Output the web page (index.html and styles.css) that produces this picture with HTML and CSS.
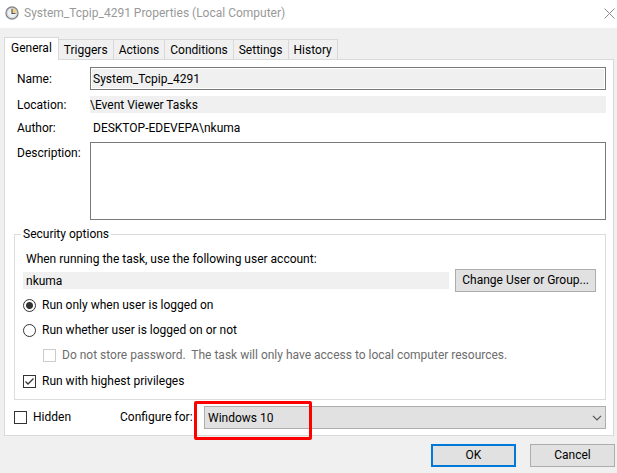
FILE: index.html
```html
<!DOCTYPE html>
<html lang="en">
  <head>
    <meta charset="UTF-8" />
    <meta name="viewport" content="width=device-width, initial-scale=1.0" />
    <title>System_Tcpip_4291 Properties (Local Computer)</title>
    <link rel="stylesheet" href="styles.css">
  </head>
  <body>
    <header class="titlebar">
      <svg class="clock" viewBox="0 0 14 14" aria-hidden="true">
        <circle cx="7" cy="7" r="6" fill="#eef1f3" stroke="#85888b" stroke-width="1.4" />
        <path d="M7 7V2a5 5 0 0 1 5 5z" fill="#f3d08a" />
        <circle cx="7" cy="7" r="4.8" fill="none" stroke="#c3c6c8" stroke-width="0.6" />
        <path d="M7 3v4.5h3.5" fill="none" stroke="#55585b" stroke-width="1.2" />
      </svg>
      <h1>System_Tcpip_4291 Properties (Local Computer)</h1>
      <button class="close" type="button" aria-label="Close">
        <svg viewBox="0 0 11 11"><path d="M0.5 0.5l10 10M10.5 0.5l-10 10" fill="none" stroke="#8c8c8c" /></svg>
      </button>
    </header>

    <main>
      <nav class="tabs" role="tablist">
        <button class="tab active" type="button" role="tab" aria-selected="true">General</button>
        <button class="tab" type="button" role="tab">Triggers</button>
        <button class="tab" type="button" role="tab">Actions</button>
        <button class="tab" type="button" role="tab">Conditions</button>
        <button class="tab" type="button" role="tab">Settings</button>
        <button class="tab" type="button" role="tab">History</button>
      </nav>

      <form class="panel" id="taskForm">
        <div class="fields">
          <label for="name">Name:</label>
          <input class="name" type="text" id="name" value="System_Tcpip_4291" readonly />
          <label for="location">Location:</label>
          <input class="plain" type="text" id="location" value="\Event Viewer Tasks" readonly />
          <span class="caption">Author:</span>
          <span class="author">DESKTOP-EDEVEPA\nkuma</span>
          <label class="top" for="description">Description:</label>
          <textarea id="description"></textarea>
        </div>

        <fieldset>
          <legend>Security options</legend>
          <label class="hint" for="account">When running the task, use the following user account:</label>
          <div class="account">
            <input class="plain" type="text" id="account" value="nkuma" readonly />
            <button class="btn" type="button">Change User or Group...</button>
          </div>
          <label class="option"><input type="radio" name="run" checked /> Run only when user is logged on</label>
          <label class="option"><input type="radio" name="run" /> Run whether user is logged on or not</label>
          <label class="option sub"><input type="checkbox" disabled /> Do not store password.&nbsp; The task will only have access to local computer resources.</label>
          <label class="option"><input type="checkbox" checked /> Run with highest privileges</label>
        </fieldset>

        <div class="bottom">
          <label class="option"><input type="checkbox" /> Hidden</label>
          <label class="configure" for="os">Configure for:</label>
          <div class="select">
            <select id="os">
              <option>Windows 10</option>
            </select>
            <svg class="arrow" viewBox="0 0 10 6" aria-hidden="true"><path d="M1 0.8l4 4 4-4" fill="none" stroke="#555" stroke-width="1.2" /></svg>
            <span class="highlight"></span>
          </div>
        </div>
      </form>
    </main>

    <footer>
      <button class="btn primary" type="submit" form="taskForm">OK</button>
      <button class="btn" type="button">Cancel</button>
    </footer>
  </body>
</html>
```
FILE: styles.css
```css
* {
  box-sizing: border-box;
}

body {
  margin: 0;
  background: #f0f0f0;
  color: #000;
}

body,
button,
input,
select,
textarea {
  font-family: Roboto, "Open Sans", sans-serif;
  font-size: 12px;
  line-height: 17px;
}

.titlebar {
  display: flex;
  align-items: center;
  height: 28px;
  padding: 0 2px 2px 5px;
  background: #fff;
}

.clock {
  width: 14px;
  height: 14px;
}

.titlebar h1 {
  flex: 1;
  margin: 0 0 0 5px;
  font-size: 12px;
  font-weight: normal;
  color: #999;
}

.close {
  display: flex;
  padding: 0;
  border: none;
  background: none;
}

.close svg {
  width: 11px;
  height: 11px;
}

main {
  padding: 9px 3px 0 4px;
}

.tabs {
  display: flex;
  align-items: flex-end;
}

.tab {
  height: 20px;
  padding: 1px 5px 0;
  border: 1px solid #d9d9d9;
  border-width: 1px 1px 0 0;
  background: #f0f0f0;
  color: #000;
}

.tab.active {
  height: 23px;
  margin-bottom: -1px;
  padding: 0 6px 2px;
  border-left-width: 1px;
  background: #fff;
  z-index: 1;
}

.panel {
  padding: 7px 7px 6px 9px;
  border: 1px solid #d9d9d9;
  background: #fff;
}

.fields {
  display: grid;
  grid-template-columns: 76px 1fr;
  row-gap: 6px;
  align-items: center;
}

.fields label,
.caption,
.author {
  height: 17px;
  padding-left: 3px;
  line-height: 19px;
}

.fields .top {
  align-self: start;
  margin-top: 2px;
}

input[type="text"] {
  width: 100%;
  min-width: 0;
  margin: 0;
  border: none;
  background: #f0f0f0;
}

.name[type="text"] {
  height: 23px;
  padding: 0 2px;
  border: 1px solid #7a7a7a;
  box-shadow: inset 0 0 0 1px #fff;
}

.plain[type="text"] {
  height: 17px;
  padding: 1px 0 0;
}

textarea {
  display: block;
  width: 100%;
  height: 78px;
  margin: 0;
  border: 1px solid #7a7a7a;
  resize: none;
}

fieldset {
  min-width: 0;
  margin: 6px 0 0;
  padding: 8px 9px 5px 8px;
  border: 1px solid #dcdcdc;
}

legend {
  padding: 0 2px;
  margin-left: -2px;
}

.hint {
  display: block;
  padding-left: 3px;
}

.account {
  display: flex;
  align-items: center;
  gap: 6px;
  margin: 1px 0;
}

.account .plain {
  flex: 1;
  padding-left: 3px;
}

.btn {
  height: 23px;
  padding: 0 6px;
  border: 1px solid #adadad;
  background: #e1e1e1;
  color: #000;
  white-space: nowrap;
}

.option {
  display: flex;
  align-items: center;
  gap: 6px;
  height: 25px;
  white-space: nowrap;
}

.option.sub {
  margin-bottom: 1px;
  padding-left: 20px;
  color: #6d6d6d;
}

.option input {
  appearance: none;
  flex: none;
  width: 13px;
  height: 13px;
  margin: 0;
  border: 1px solid #333;
  background: #fff;
}

.option input[type="radio"] {
  border-radius: 50%;
}

.option input[type="radio"]:checked {
  background: radial-gradient(circle, #333 3px, #fff 4px);
}

.option input[type="checkbox"]:checked {
  background: url("data:image/svg+xml,%3Csvg xmlns='http://www.w3.org/2000/svg' viewBox='0 0 11 11'%3E%3Cpath d='M1.5 5.5l2.5 2.5 5.5-5.5' fill='none' stroke='%23333' stroke-width='1.3'/%3E%3C/svg%3E");
}

.option input:disabled {
  border-color: #ccc;
}

.bottom {
  display: flex;
  align-items: center;
  margin-top: 6px;
}

.bottom .option {
  width: 106px;
  height: 23px;
}

.configure {
  width: 84px;
  white-space: nowrap;
}

.select {
  position: relative;
  flex: 1;
}

.select select {
  appearance: none;
  display: block;
  width: 100%;
  height: 23px;
  margin: 0;
  padding: 1px 20px 0 3px;
  border: 1px solid #adadad;
  border-radius: 0;
  background: #e1e1e1;
  color: #000;
}

.arrow {
  position: absolute;
  top: 9px;
  right: 4px;
  width: 10px;
  height: 6px;
  pointer-events: none;
}

/* red frame around the selected value */
.highlight {
  position: absolute;
  top: -5px;
  left: -10px;
  width: 118px;
  height: 39px;
  border: 3px solid #f00;
  border-radius: 2px;
  pointer-events: none;
}

footer {
  display: flex;
  justify-content: flex-end;
  gap: 14px;
  padding: 8px 2px 6px;
}

footer .btn {
  width: 85px;
}

.primary {
  border: 2px solid #0078d7;
}
```
